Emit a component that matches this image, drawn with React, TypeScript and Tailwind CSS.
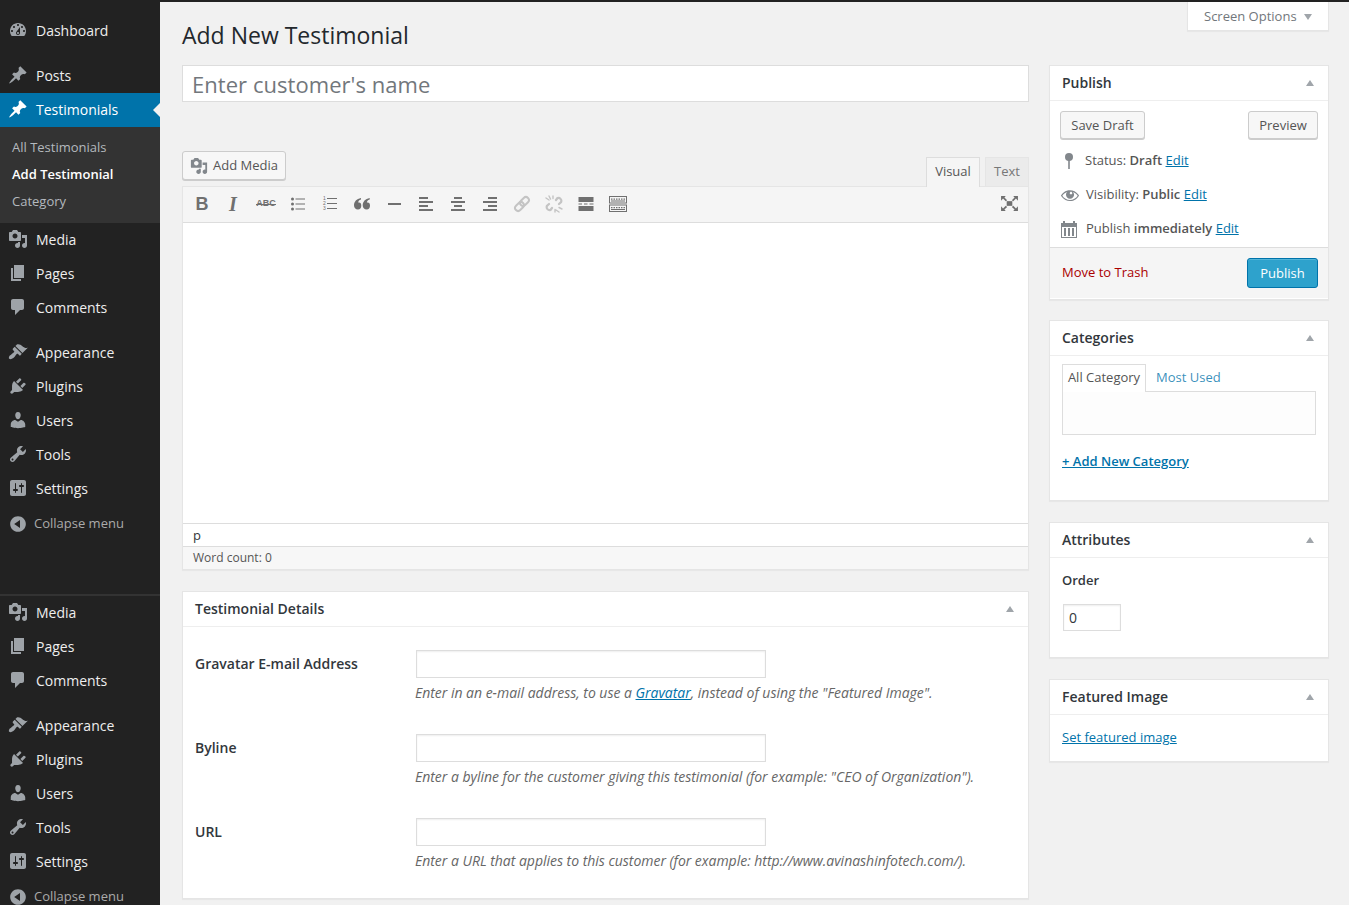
import type { ReactNode } from "react";

const paths: Record<string, string> = {
    dashboard:
        "M3.76 16h12.48c1.1-1.37 1.76-3.11 1.76-5 0-4.42-3.58-8-8-8s-8 3.58-8 8c0 1.89.66 3.63 1.76 5zM10 4c.55 0 1 .45 1 1s-.45 1-1 1-1-.45-1-1 .45-1 1-1zM6 6c.55 0 1 .45 1 1s-.45 1-1 1-1-.45-1-1 .45-1 1-1zm8 0c.55 0 1 .45 1 1s-.45 1-1 1-1-.45-1-1 .45-1 1-1zm-5.37 5.55L12 7v6c0 1.1-.9 2-2 2s-2-.9-2-2c0-.57.24-1.08.63-1.45zM4 10c.55 0 1 .45 1 1s-.45 1-1 1-1-.45-1-1 .45-1 1-1zm12 0c.55 0 1 .45 1 1s-.45 1-1 1-1-.45-1-1 .45-1 1-1zm-5 3c0-.55-.45-1-1-1s-1 .45-1 1 .45 1 1 1 1-.45 1-1z",
    pin: "M10.44 3.02l1.82-1.82 6.36 6.35-1.83 1.82c-1.05-.68-2.48-.57-3.41.36l-.75.75c-.92.93-1.04 2.35-.35 3.41l-1.83 1.82-2.41-2.41-2.8 2.79c-.42.42-3.38 2.71-3.8 2.29s1.86-3.39 2.28-3.81l2.79-2.79L4.1 9.36l1.83-1.82c1.05.69 2.48.57 3.4-.36l.75-.75c.93-.92 1.05-2.35.36-3.41z",
    media: "M13 11V4c0-.55-.45-1-1-1h-1.67L9 1H5L3.67 3H2c-.55 0-1 .45-1 1v7c0 .55.45 1 1 1h10c.55 0 1-.45 1-1zM7 4.5c1.38 0 2.5 1.12 2.5 2.5S8.38 9.5 7 9.5 4.5 8.38 4.5 7 5.62 4.5 7 4.5zM14 6h5v10.5c0 1.38-1.12 2.5-2.5 2.5S14 17.88 14 16.5s1.12-2.5 2.5-2.5c.17 0 .34.02.5.05V9h-3V6zm-4 8.05V13h2v3.5c0 1.38-1.12 2.5-2.5 2.5S7 17.88 7 16.5 8.12 14 9.5 14c.17 0 .34.02.5.05z",
    pages: "M6 15V2h10v13H6zm-1 1h8v2H3V5h2v11z",
    comments: "M5 2h9c1.1 0 2 .9 2 2v7c0 1.1-.9 2-2 2h-2l-5 5v-5H5c-1.1 0-2-.9-2-2V4c0-1.1.9-2 2-2z",
    appearance:
        "M14.48 11.06L7.41 3.99l1.5-1.5c.5-.56 2.3-.47 3.51.32 1.21.8 1.43 1.28 2.91 2.1 1.18.64 2.45 1.26 4.45.85zm-.71.71L6.7 4.7 4.93 6.47c-.39.39-.39 1.02 0 1.41l1.06 1.06c.39.39.39 1.03 0 1.42-.6.6-1.43 1.11-2.21 1.69-.35.26-.7.53-1.01.84C1.43 13.23.26 15.72 1.3 16.76c1.04 1.04 3.53-.13 4.87-1.47.31-.31.58-.66.84-1.01.58-.78 1.09-1.61 1.69-2.21.39-.39 1.03-.39 1.42 0l1.06 1.06c.39.39 1.02.39 1.41 0z",
    plugins:
        "M13.11 4.36L9.87 7.6 8 5.73l3.24-3.24c.35-.34 1.05-.2 1.56.32.52.51.66 1.21.31 1.55zm-8 1.77l.91-1.12 9.01 9.01-1.19.84c-.71.71-2.63 1.16-3.82 1.16H6.14L4.9 17.26c-.59.59-1.54.59-2.12 0-.59-.58-.59-1.53 0-2.12l1.24-1.24v-3.88c0-1.13.4-3.19 1.09-3.89zm7.26 3.97l3.24-3.24c.34-.35 1.04-.21 1.55.31.52.51.66 1.21.31 1.55l-3.24 3.25z",
    users: "M10 9.25c-2.27 0-2.73-3.44-2.73-3.44C7 4.02 7.82 2 9.97 2c2.16 0 2.98 2.02 2.71 3.81 0 0-.41 3.44-2.68 3.44zm0 2.57L12.72 10c2.39 0 4.52 2.33 4.52 4.53v2.49s-3.65 1.13-7.24 1.13c-3.65 0-7.24-1.13-7.24-1.13v-2.49c0-2.25 1.94-4.48 4.47-4.48z",
    tools: "M16.68 9.77c-1.34 1.34-3.3 1.67-4.95.99l-5.41 6.52c-.99.99-2.59.99-3.58 0s-.99-2.59 0-3.57l6.52-5.42c-.68-1.65-.35-3.61.99-4.95 1.28-1.28 3.12-1.62 4.72-1.06l-2.89 2.89 2.82 2.82 2.86-2.87c.53 1.58.18 3.39-1.08 4.65zM3.81 16.21c.4.39 1.04.39 1.43 0 .4-.4.4-1.04 0-1.43-.39-.4-1.03-.4-1.43 0-.39.39-.39 1.03 0 1.43z",
    settings:
        "M18 16V4c0-1.1-.9-2-2-2H4c-1.1 0-2 .9-2 2v12c0 1.1.9 2 2 2h12c1.1 0 2-.9 2-2zM8 11h1c.55 0 1 .45 1 1s-.45 1-1 1H8v1.5c0 .28-.22.5-.5.5s-.5-.22-.5-.5V13H6c-.55 0-1-.45-1-1s.45-1 1-1h1V5.5c0-.28.22-.5.5-.5s.5.22.5.5V11zm5-2h-1c-.55 0-1-.45-1-1s.45-1 1-1h1V5.5c0-.28.22-.5.5-.5s.5.22.5.5V7h1c.55 0 1 .45 1 1s-.45 1-1 1h-1v5.5c0 .28-.22.5-.5.5s-.5-.22-.5-.5V9z",
    collapse: "M10 2.16c4.33 0 7.84 3.51 7.84 7.84s-3.51 7.84-7.84 7.84S2.16 14.33 2.16 10 5.71 2.16 10 2.16zm2 11.72V6.12L6.18 9.97z",
    eye: "M18.3 9.5C15 4.9 8.5 3.8 3.9 7.2c-1.2.9-2.2 2.1-3 3.4.2.4.5.8.8 1.2 3.3 4.6 9.6 5.6 14.2 2.4.9-.7 1.7-1.4 2.4-2.4.3-.4.5-.8.8-1.2-.3-.4-.5-.8-.8-1.1zm-8.2-2.3c.5-.5 1.3-.5 1.8 0s.5 1.3 0 1.8-1.3.5-1.8 0c-.5-.4-.5-1.3 0-1.8zm-.1 7.7c-3.1 0-6-1.6-7.7-4.2C3.5 9 5.1 7.8 7 7c-.7.8-1 1.7-1 2.7 0 2.2 1.7 4.1 4 4.1 2.2 0 4.1-1.7 4.1-4v-.1c0-1-.4-2-1.1-2.7 1.9.8 3.5 2 4.7 3.7-1.7 2.6-4.6 4.2-7.7 4.2z",
};

const Dash = ({ name, className }: { name: string; className?: string }) => (
    <svg viewBox="0 0 20 20" className={className} fill="currentColor" fillRule="evenodd">
        <path d={paths[name]} />
    </svg>
);

const MenuItem = ({ icon, label, active }: { icon: string; label: string; active?: boolean }) => (
    <div className={`relative flex h-[34px] items-center pb-[2px] pl-[8px] text-[14px] ${active ? "bg-[#0073aa] text-white" : "text-[#eeeeee]"}`}>
        <Dash name={icon} className={`h-[20px] w-[20px] ${active ? "text-white" : "text-[#9ea3a8]"}`} />
        <span className="ml-[8px]">{label}</span>
        {active && (
            <span className="absolute right-0 top-[10px] border-y-[7px] border-r-[7px] border-y-transparent border-r-[#f1f1f1]" />
        )}
    </div>
);

const MenuGroup = () => (
    <>
        <MenuItem icon="media" label="Media" />
        <MenuItem icon="pages" label="Pages" />
        <MenuItem icon="comments" label="Comments" />
        <div className="h-[11px]" />
        <MenuItem icon="appearance" label="Appearance" />
        <MenuItem icon="plugins" label="Plugins" />
        <MenuItem icon="users" label="Users" />
        <MenuItem icon="tools" label="Tools" />
        <MenuItem icon="settings" label="Settings" />
        <div className="flex h-[34px] items-center pl-[8px] pt-[2px] text-[13px] text-[#aaaaaa]">
            <Dash name="collapse" className="h-[20px] w-[20px] text-[#9ea3a8]" />
            <span className="ml-[6px]">Collapse menu</span>
        </div>
    </>
);

const Sidebar = () => (
    <aside className="w-[160px] shrink-0 bg-[#222222] pt-[12px]">
        <MenuItem icon="dashboard" label="Dashboard" />
        <div className="h-[11px]" />
        <MenuItem icon="pin" label="Posts" />
        <MenuItem icon="pin" label="Testimonials" active />
        <div className="flex h-[96px] flex-col justify-center gap-[7px] bg-[#333333] pb-[2px] pl-[12px] text-[13px] leading-[20px] text-[#b4b9be]">
            <span>All Testimonials</span>
            <span className="font-semibold text-white">Add Testimonial</span>
            <span>Category</span>
        </div>
        <MenuGroup />
        <div className="mt-[54px] h-[2px] bg-[#333333]" />
        <MenuGroup />
    </aside>
);

const Tool = ({ children, className }: { children: ReactNode; className?: string }) => (
    <div className={`flex h-[20px] w-[20px] items-center justify-center text-[#707070] ${className ?? "mr-[12px]"}`}>{children}</div>
);

const AlignIcon = ({ rows }: { rows: [number, number][] }) => (
    <svg viewBox="0 0 16 14" className="h-[14px] w-[16px]" fill="#707070">
        {rows.map(([x, w], i) => (
            <rect key={i} x={x} y={i * 4} width={w} height={2} />
        ))}
    </svg>
);

const Toolbar = () => (
    <div className="flex h-[36px] items-center border-b border-[#dddddd] bg-[#f5f5f5] pb-[2px] pl-[9px] pr-[9px]">
        <Tool><span className="font-['Liberation_Sans',sans-serif] text-[18px] font-bold leading-none">B</span></Tool>
        <Tool><span className="-ml-[2px] font-['Liberation_Serif',serif] text-[20px] font-bold italic leading-none">I</span></Tool>
        <Tool>
            <span className="relative font-['Liberation_Sans',sans-serif] text-[9px] font-bold leading-none">
                ABC
                <span className="absolute left-0 right-0 top-[5px] h-px bg-[#707070]" />
            </span>
        </Tool>
        <Tool>
            <svg viewBox="0 0 14 14" className="h-[14px] w-[14px]" fill="#707070">
                <circle cx="1.500" cy="2" r="1.500" /><circle cx="1.500" cy="7" r="1.500" /><circle cx="1.500" cy="12" r="1.500" />
                <rect x="4.500" y="1.500" width="9.500" height="1" /><rect x="4.500" y="6.500" width="9.500" height="1" /><rect x="4.500" y="11.500" width="9.500" height="1" />
            </svg>
        </Tool>
        <Tool>
            <div className="relative h-[14px] w-[14px]">
                <div className="absolute left-0 top-[-1px] flex flex-col font-['Liberation_Sans',sans-serif] text-[5px] leading-[5px]">
                    <span>1</span><span>2</span><span>3</span>
                </div>
                <div className="absolute left-[4px] right-0 top-[1px] h-px bg-[#707070]" />
                <div className="absolute left-[4px] right-0 top-[6px] h-px bg-[#707070]" />
                <div className="absolute left-[4px] right-0 top-[11px] h-px bg-[#707070]" />
            </div>
        </Tool>
        <Tool>
            <svg viewBox="0 0 16 12" className="h-[12px] w-[16px]" fill="#707070">
                <path d="M7 0v1.400C5 2 4.200 3.200 4.200 4.600c.3-.1.6-.1.9-.1C6.400 4.500 7.300 5.600 7.300 7.800 7.300 10 6 11.500 4 11.500 1.500 11.500 0 9.700 0 7.200 0 3.800 2.500 .8 7 0z" />
                <path d="M15.700 0v1.400c-2 .6-2.800 1.800-2.800 3.200.3-.1.6-.1.9-.1 1.300 0 2.200 1.100 2.200 3.300 0 2.200-1.300 3.700-3.300 3.700-2.500 0-4-1.800-4-4.300C8.700 3.800 11.200 .8 15.700 0z" />
            </svg>
        </Tool>
        <Tool><div className="h-[2px] w-[13px] bg-[#707070]" /></Tool>
        <Tool><AlignIcon rows={[[1, 9], [1, 14], [1, 9], [1, 14]]} /></Tool>
        <Tool><AlignIcon rows={[[4, 8], [1, 14], [4, 8], [1, 14]]} /></Tool>
        <Tool><AlignIcon rows={[[6, 9], [1, 14], [6, 9], [1, 14]]} /></Tool>
        <Tool>
            <svg viewBox="0 0 18 18" className="h-[18px] w-[18px]" fill="none" stroke="#c4c4c4" strokeWidth="2">
                <g transform="rotate(-45 9 9)">
                    <rect x="0.500" y="6" width="10" height="6" rx="3" />
                    <rect x="7.500" y="6" width="10" height="6" rx="3" />
                </g>
            </svg>
        </Tool>
        <Tool>
            <svg viewBox="0 0 18 18" className="h-[18px] w-[18px]" fill="none" stroke="#c4c4c4" strokeWidth="2.200" strokeLinecap="round">
                <path d="M11 5l1.500-2a3 3 0 0 1 3.600 4l-2.100 2" />
                <path d="M7 13l-1.500 2a3 3 0 0 1-3.600-4l2.100-2" />
                <path strokeWidth="1.400" d="M1 3l3 2M4 1l1.500 3M8 1v2.500M14 17l-3-2M17 14l-3-1.500M10 17v-2.500" />
            </svg>
        </Tool>
        <Tool>
            <svg viewBox="0 0 16 14" className="h-[14px] w-[16px]" fill="#707070">
                <rect x="0.500" y="0" width="15" height="5" />
                <rect x="0.500" y="6.500" width="3.500" height="1" /><rect x="6" y="6.500" width="3.500" height="1" /><rect x="11.500" y="6.500" width="4" height="1" />
                <rect x="0.500" y="9" width="15" height="5" />
            </svg>
        </Tool>
        <Tool className="">
            <svg viewBox="0 0 18 16" className="h-[16px] w-[18px]" fill="#707070">
                <path fillRule="evenodd" d="M0 0h18v7.500H0zM1 1v5.500h16V1zM0 8.500h18V16H0zM1 9.500V15h16V9.500z" />
                <path d="M2 2.500h1.500v1.200H2zM4.500 2.500H6v1.200H4.500zM7 2.500h1.500v1.200H7zM9.500 2.500H11v1.200H9.500zM12 2.500h1.500v1.200H12zM14.500 2.500H16v1.200h-1.500zM2 4.500h14v1H2zM2 11h1.500v1.200H2zM4.500 11H6v1.200H4.500zM7 11h1.500v1.200H7zM9.500 11H11v1.200H9.500zM12 11h1.500v1.200H12zM14.500 11H16v1.200h-1.500zM2 13h14v1H2z" />
            </svg>
        </Tool>
        <div className="ml-auto flex h-[20px] w-[20px] items-center justify-center">
            <svg viewBox="0 0 18 16" className="h-[15px] w-[17px]" fill="#707070">
                <rect x="6" y="5.500" width="6" height="5" />
                <path d="M0 0h5L3.600 1.500 6.500 4.400 5 5.500 2.100 2.700 0 5zM18 0h-5l1.400 1.500-2.900 2.900L13 5.500l2.900-2.800L18 5zM0 16h5l-1.400-1.500 2.900-2.900L5 10.500l-2.900 2.800L0 11zM18 16h-5l1.400-1.500-2.900-2.900 1.500-1.100 2.900 2.800L18 11z" />
            </svg>
        </div>
    </div>
);

const Editor = () => (
    <>
        <div className="mt-[49px] flex h-[35px] items-start justify-between">
            <button className="flex h-[29px] w-[104px] items-center gap-[5px] rounded-[3px] border border-[#cccccc] bg-[#f7f7f7] pl-[7px] text-[13px] text-[#555555] shadow-[0_1px_0_#cccccc]">
                <Dash name="media" className="h-[18px] w-[18px] text-[#82878c]" />
                Add Media
            </button>
            <div className="mt-[6px] flex text-[13px]">
                <div className="z-10 mr-[5px] flex h-[30px] w-[54px] items-center justify-center border border-b-0 border-[#dddddd] bg-[#f5f5f5] pb-[2px] text-[#555555]">Visual</div>
                <div className="flex h-[29px] w-[44px] items-center justify-center border border-b-0 border-[#e5e5e5] bg-[#ebebeb] text-[#777777]">Text</div>
            </div>
        </div>
        <div className="border border-[#e5e5e5] bg-white shadow-[0_1px_1px_rgba(0,0,0,0.04)]">
            <Toolbar />
            <div className="h-[301px] border-b border-[#dddddd]" />
            <div className="flex h-[23px] items-center border-b border-[#dddddd] pl-[10px] pt-[2px] text-[13px] text-[#32373c]">p</div>
            <div className="flex h-[22px] items-center bg-[#f7f7f7] pb-[1px] pl-[10px] text-[12px] text-[#555555]">Word count: 0</div>
        </div>
    </>
);

const Card = ({ title, children, className }: { title: string; children: ReactNode; className?: string }) => (
    <section className={`border border-[#e5e5e5] bg-white shadow-[0_1px_1px_rgba(0,0,0,0.04)] ${className ?? ""}`}>
        <div className="flex h-[35px] items-center justify-between border-b border-[#eeeeee] pb-[2px] pl-[12px] pr-[14px] text-[14px] font-semibold text-[#32373c]">
            {title}
            <span className="mt-[2px] border-x-[4px] border-b-[6px] border-x-transparent border-b-[#a0a5aa]" />
        </div>
        {children}
    </section>
);

const Field = ({ label, children }: { label: string; children: ReactNode }) => (
    <div className="flex h-[84px]">
        <div className="w-[233px] shrink-0 pl-[12px] pt-[4px] text-[14px] font-semibold leading-[20px] text-[#32373c]">{label}</div>
        <div>
            <div className="h-[28px] w-[350px] border border-[#dddddd] bg-white shadow-[inset_0_1px_2px_rgba(0,0,0,0.07)]" />
            <p className="-ml-px mt-[5px] whitespace-nowrap text-[14px] italic leading-[20px] tracking-[-0.02px] text-[#666666]">{children}</p>
        </div>
    </div>
);

const Details = () => (
    <Card title="Testimonial Details" className="mt-[21px] h-[308px]">
        <div className="pt-[23px]">
            <Field label="Gravatar E-mail Address">
                Enter in an e-mail address, to use a <span className="text-[#0073aa] underline">Gravatar</span>, instead of using the "Featured Image".
            </Field>
            <Field label="Byline">Enter a byline for the customer giving this testimonial (for example: "CEO of Organization").</Field>
            <Field label="URL">Enter a URL that applies to this customer (for example: http://www.avinashinfotech.com/).</Field>
        </div>
    </Card>
);

const Edit = () => <span className="text-[#0073aa] underline">Edit</span>;

const Publish = () => (
    <Card title="Publish" className="h-[235px]">
        <div className="flex h-[146px] flex-col px-[10px] pt-[10px] text-[13px] text-[#555555]">
            <div className="flex justify-between">
                <button className="h-[28px] w-[85px] rounded-[3px] border border-[#cccccc] bg-[#f7f7f7] pt-[2px] shadow-[0_1px_0_#cccccc]">Save Draft</button>
                <button className="h-[28px] w-[70px] rounded-[3px] border border-[#cccccc] bg-[#f7f7f7] pt-[2px] shadow-[0_1px_0_#cccccc]">Preview</button>
            </div>
            <div className="mt-[12px] flex h-[20px] items-center">
                <svg viewBox="0 0 20 20" className="h-[20px] w-[20px] shrink-0" fill="#82878c">
                    <circle cx="9" cy="6" r="4" /><rect x="8.200" y="8" width="1.600" height="10" />
                </svg>
                <span className="ml-[5px]">Status: <b className="font-semibold">Draft</b> <Edit /></span>
            </div>
            <div className="mt-[14px] flex h-[20px] items-center">
                <Dash name="eye" className="h-[20px] w-[20px] shrink-0 text-[#82878c]" />
                <span className="ml-[6px]">Visibility: <b className="font-semibold">Public</b> <Edit /></span>
            </div>
            <div className="mt-[14px] flex h-[20px] items-center">
                <svg viewBox="0 0 20 20" className="-ml-px h-[20px] w-[20px] shrink-0" fill="#82878c">
                    <path fillRule="evenodd" d="M2 4h2V2h2v2h8V2h2v2h2v15H2zM3 8v10h14V8z" />
                    <path d="M5 9h2v8H5zM9 9h2v8H9zM13 9h2v8h-2z" />
                </svg>
                <span className="ml-[7px]">Publish <b className="font-semibold">immediately</b> <Edit /></span>
            </div>
        </div>
        <div className="flex h-[51px] items-center justify-between border-t border-[#dddddd] bg-[#f5f5f5] pl-[12px] pr-[10px] text-[13px]">
            <span className="text-[#aa0000]">Move to Trash</span>
            <button className="h-[30px] w-[71px] rounded-[3px] border border-[#0073aa] bg-[#2ea2cc] pt-[1px] text-white shadow-[inset_0_1px_0_rgba(120,200,230,0.5)]">Publish</button>
        </div>
    </Card>
);

const Categories = () => (
    <Card title="Categories" className="mt-[20px] h-[181px]">
        <div className="px-[12px] pt-[8px] text-[13px]">
            <div className="flex h-[28px]">
                <div className="z-10 flex h-[28px] w-[84px] items-center justify-center border border-b-0 border-[#dddddd] bg-white pb-[2px] text-[#555555]">All Category</div>
                <div className="flex items-center pb-[1px] pl-[10px] text-[#0073aa]/80">Most Used</div>
            </div>
            <div className="mt-[-1px] h-[44px] border border-[#dddddd] bg-[#fdfdfd]" />
            <div className="mt-[17px] font-semibold text-[#0073aa] underline">+ Add New Category</div>
        </div>
    </Card>
);

const Attributes = () => (
    <Card title="Attributes" className="mt-[21px] h-[136px]">
        <div className="px-[12px] pt-[12px] text-[13px] text-[#32373c]">
            <div className="font-semibold leading-[20px]">Order</div>
            <div className="ml-px mt-[14px] flex h-[27px] w-[58px] items-center border border-[#dddddd] pl-[5px] text-[14px] text-[#32373c] shadow-[inset_0_1px_2px_rgba(0,0,0,0.07)]">0</div>
        </div>
    </Card>
);

const FeaturedImage = () => (
    <Card title="Featured Image" className="mt-[21px] h-[83px]">
        <div className="px-[12px] pt-[13px] text-[13px] leading-[18px] text-[#0073aa] underline">Set featured image</div>
    </Card>
);

export default function App() {
    return (
        <div className="relative h-[905px] overflow-hidden bg-[#f1f1f1] font-['Open_Sans',sans-serif]">
            <div className="h-[2px] bg-[#222222]" />
            <div className="flex h-[903px]">
                <Sidebar />
                <main className="flex-1 pl-[22px] pr-[20px]">
                    <div className="flex h-[63px] items-start pt-[15px]">
                        <h1 className="text-[23px] leading-[36px] text-[#23282d]">Add New Testimonial</h1>
                    </div>
                    <div className="flex gap-[20px]">
                        <div className="w-[847px]">
                            <div className="flex h-[37px] items-center border border-[#dddddd] bg-white pl-[9px] pt-[2px] text-[22px] tracking-[0.05px] text-[#72777c]">Enter customer's name</div>
                            <Editor />
                            <Details />
                        </div>
                        <div className="w-[280px]">
                            <Publish />
                            <Categories />
                            <Attributes />
                            <FeaturedImage />
                        </div>
                    </div>
                </main>
            </div>
            <div className="absolute right-[20px] top-[2px] flex h-[29px] w-[142px] items-center border border-t-0 border-[#e5e5e5] bg-white pl-[16px] pt-[2px] text-[13px] text-[#72777c] shadow-[0_1px_1px_rgba(0,0,0,0.04)]">
                Screen Options
                <span className="ml-[7px] border-x-[4px] border-t-[6px] border-x-transparent border-t-[#a0a5aa]" />
            </div>
        </div>
    );
}
